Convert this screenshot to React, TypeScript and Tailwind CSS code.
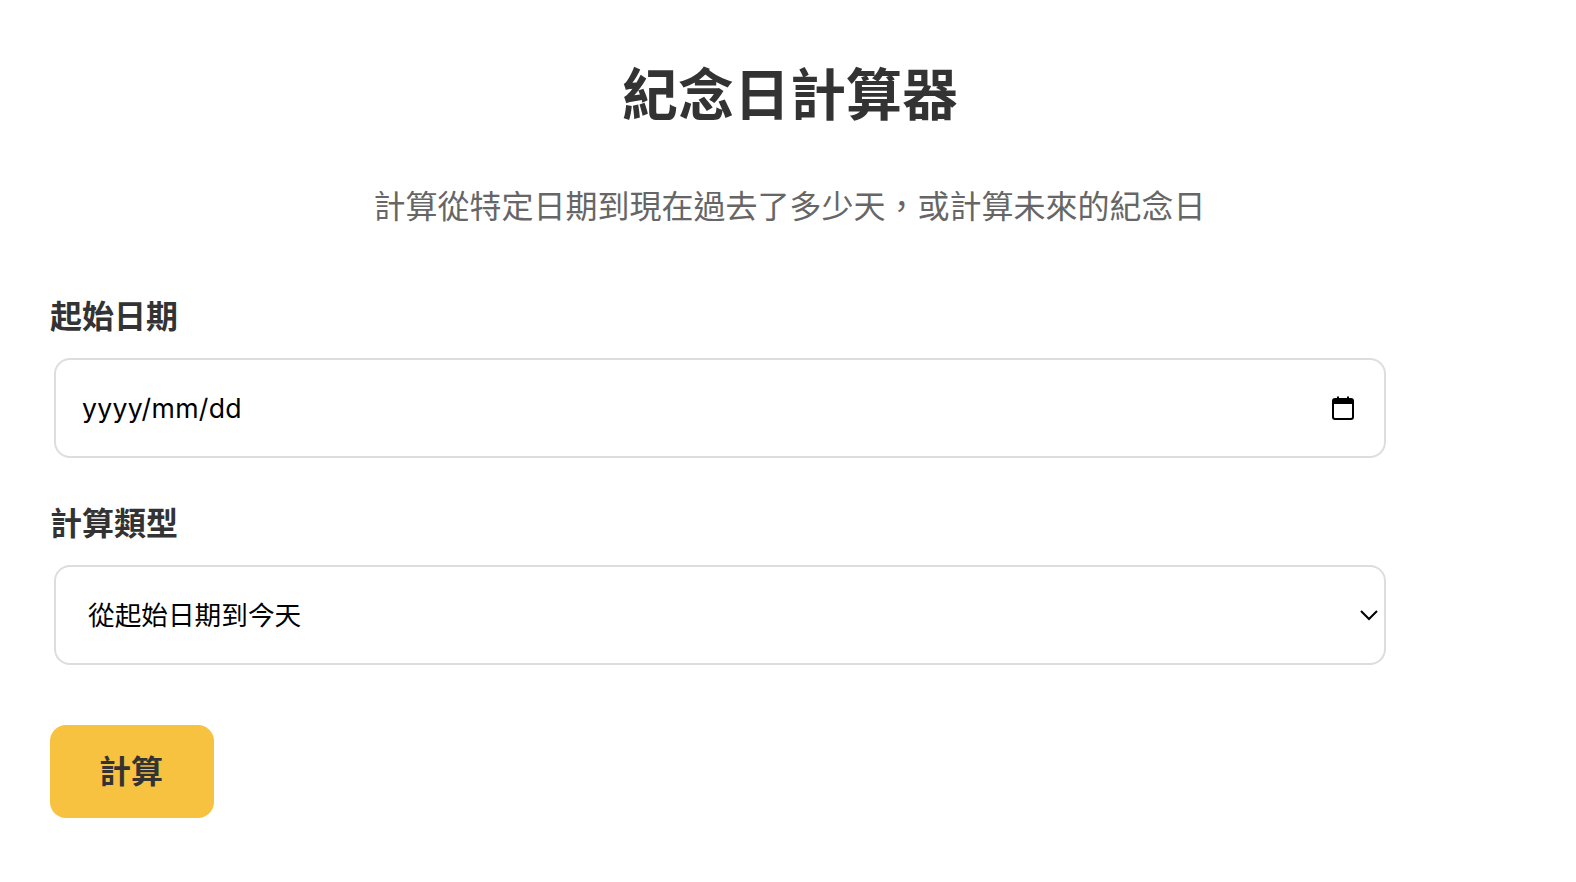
export default function App() {
  return (
    <div className="min-h-[882px] bg-white font-['Inter','Noto_Sans_CJK_TC',sans-serif] text-[#333333]">
      <div className="w-[1576px] pr-[46px] pl-[50px]">
        <h1 className="pt-[61px] text-center text-[56px] leading-[68px] font-bold">紀念日計算器</h1>
        <p className="mt-[56px] pr-[1px] text-center text-[32px] leading-[44px] text-[#666666]">計算從特定日期到現在過去了多少天，或計算未來的紀念日</p>
        <div className="mt-[66px] text-[32px] leading-[44px] font-semibold">起始日期</div>
        <div className="mt-[19px] ml-[4px] flex h-[100px] w-[1332px] items-center justify-between rounded-[16px] border-2 border-[#dddddd] pr-[30px] pl-[26px] text-[26.67px] tracking-[0.3px] text-black">
          <span>yyyy/mm/dd</span>
          <svg width="22" height="24" viewBox="0 0 22 24" fill="none">
            <rect x="1" y="3" width="20" height="20" rx="2" stroke="black" strokeWidth="2" />
            <path d="M1 3h20v5H1z" fill="black" />
            <path d="M6 0.5v4M16 0.5v4" stroke="black" strokeWidth="2" />
          </svg>
        </div>
        <div className="mt-[44px] text-[32px] leading-[44px] font-semibold">計算類型</div>
        <div className="mt-[19px] ml-[4px] flex h-[100px] w-[1332px] items-center justify-between rounded-[16px] border-2 border-[#dddddd] pr-[5px] pl-[32px] text-[26.67px] text-black">
          <span>從起始日期到今天</span>
          <svg width="20" height="20" viewBox="0 0 20 20" fill="none" stroke="black" strokeWidth="2"><path d="M2 6l8 8 8-8"/></svg>
        </div>
        <button className="mt-[60px] flex h-[93px] w-[164px] items-center justify-center rounded-[16px] bg-[#f8c241] pr-[2px] text-[32px] font-bold text-[#333333]">計算</button>
      </div>
    </div>
  );
}
